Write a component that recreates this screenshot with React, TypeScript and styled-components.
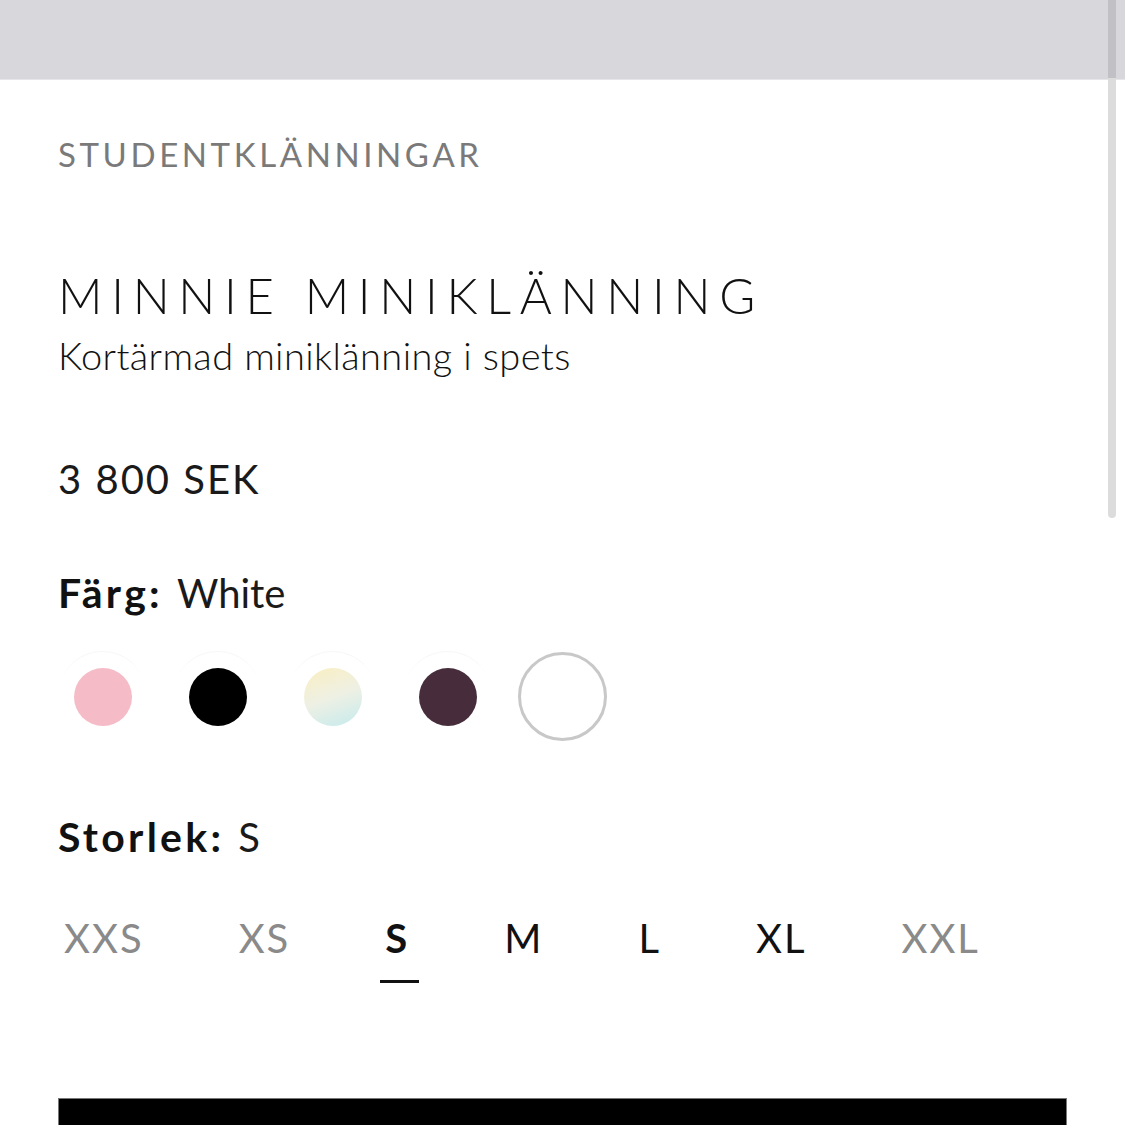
import * as React from "react";
import styled, { createGlobalStyle } from "styled-components";

const GlobalStyle = createGlobalStyle`
  html, body {
    margin: 0;
    padding: 0;
    background: #ffffff;
    font-family: "Lato", "Noto Sans", sans-serif;
    color: #111111;
    overflow: hidden;
  }
`;

const SPage = styled.div`
  position: relative;
  width: 1125px;
  height: 1125px;
  overflow: hidden;
  background: #ffffff;
`;

const STopBar = styled.div`
  height: 80px;
  background: #d8d7dc;
  border-bottom: 1px solid #e6e6e9;
  box-sizing: border-box;
`;

const SScrollThumb = styled.div`
  position: absolute;
  top: 0;
  right: 9px;
  width: 8px;
  height: 518px;
  border-radius: 0 0 4px 4px;
  background: #dcdcdc;

  &::before {
    content: "";
    position: absolute;
    top: 0;
    left: 0;
    right: 0;
    height: 78px;
    background: #c1c0c5;
  }
`;

const SContent = styled.div`
  display: flex;
  flex-direction: column;
  padding: 0 58px;
`;

const SCategory = styled.div`
  margin-top: 54px;
  font-size: 33px;
  line-height: 40px;
  letter-spacing: 3.6px;
  color: #7a7a7a;
  font-weight: 400;
`;

const STitle = styled.h1`
  margin: 93px 0 0;
  font-size: 49px;
  line-height: 56px;
  font-weight: 300;
  letter-spacing: 8.7px;
  color: #111111;
`;

const SSubtitle = styled.p`
  margin: 8px 0 0;
  font-size: 38px;
  line-height: 48px;
  font-weight: 300;
  letter-spacing: 0.01em;
  color: #111111;
`;

const SPrice = styled.div`
  margin-top: 76px;
  font-size: 40px;
  line-height: 48px;
  letter-spacing: 0.05em;
  color: #1a1a1a;
`;

const SLabelRow = styled.div<{ $top: number }>`
  margin-top: ${(p) => p.$top}px;
  font-size: 41px;
  line-height: 48px;
  color: #111111;
`;

const SLabel = styled.span`
  font-weight: 700;
  letter-spacing: 0.08em;
  margin-right: 14px;
`;

const SValue = styled.span`
  font-weight: 400;
  font-size: 40px;
  letter-spacing: 0;
  color: #1a1a1a;
`;

const SSwatches = styled.div`
  display: flex;
  align-items: center;
  gap: 26px;
  margin-top: 35px;
`;

const SSwatch = styled.div<{ $selected?: boolean }>`
  width: 89px;
  height: 89px;
  box-sizing: border-box;
  border-radius: 50%;
  display: flex;
  align-items: center;
  justify-content: center;
  border: 3px solid ${(p) => (p.$selected ? "#c8c8c8" : "transparent")};
  box-shadow: ${(p) => (p.$selected ? "none" : "0 -2px 1px -1px rgba(0,0,0,0.04)")};
`;

const SDot = styled.div<{ $fill: string }>`
  width: 58px;
  height: 58px;
  border-radius: 50%;
  background: ${(p) => p.$fill};
`;

const SSizes = styled.div`
  display: flex;
  align-items: flex-start;
  gap: 95px;
  margin-top: 53px;
  padding-left: 6px;
`;

const SSize = styled.div<{ $state: "off" | "on" | "active" }>`
  position: relative;
  font-size: 40px;
  line-height: 48px;
  letter-spacing: 0.05em;
  font-weight: ${(p) => (p.$state === "active" ? 700 : 400)};
  color: ${(p) => (p.$state === "off" ? "#8a8a8a" : "#111111")};
  padding-bottom: 21px;

  &::after {
    content: "";
    display: ${(p) => (p.$state === "active" ? "block" : "none")};
    position: absolute;
    left: -5px;
    right: -10px;
    bottom: 0;
    height: 3px;
    background: #111111;
  }
`;

const SButton = styled.button`
  margin-top: 115px;
  height: 80px;
  width: 100%;
  background: #000000;
  border: 1px solid #777777;
  color: #ffffff;
  font-family: inherit;
  font-size: 32px;
`;

const colors = [
  "#f5bcc7",
  "#000000",
  "linear-gradient(160deg, #f8efc8 10%, #eef0e4 50%, #c9ebec 95%)",
  "#472d3b",
];

const sizes: { label: string; state: "off" | "on" | "active" }[] = [
  { label: "XXS", state: "off" },
  { label: "XS", state: "off" },
  { label: "S", state: "active" },
  { label: "M", state: "on" },
  { label: "L", state: "on" },
  { label: "XL", state: "on" },
  { label: "XXL", state: "off" },
];

const App = () => (
  <SPage>
    <GlobalStyle />
    <STopBar />
    <SScrollThumb />
    <SContent>
      <SCategory>{`STUDENTKLÄNNINGAR`}</SCategory>
      <STitle>{`MINNIE MINIKLÄNNING`}</STitle>
      <SSubtitle>{`Kortärmad miniklänning i spets`}</SSubtitle>
      <SPrice>{`3 800 SEK`}</SPrice>
      <SLabelRow $top={66}>
        <SLabel>{`Färg:`}</SLabel>
        <SValue>{`White`}</SValue>
      </SLabelRow>
      <SSwatches>
        {colors.map((c) => (
          <SSwatch key={c}>
            <SDot $fill={c} />
          </SSwatch>
        ))}
        <SSwatch $selected>
          <SDot $fill="#ffffff" />
        </SSwatch>
      </SSwatches>
      <SLabelRow $top={72}>
        <SLabel>{`Storlek:`}</SLabel>
        <SValue>{`S`}</SValue>
      </SLabelRow>
      <SSizes>
        {sizes.map((s) => (
          <SSize key={s.label} $state={s.state}>
            {s.label}
          </SSize>
        ))}
      </SSizes>
      <SButton />
    </SContent>
  </SPage>
);

export default App;
